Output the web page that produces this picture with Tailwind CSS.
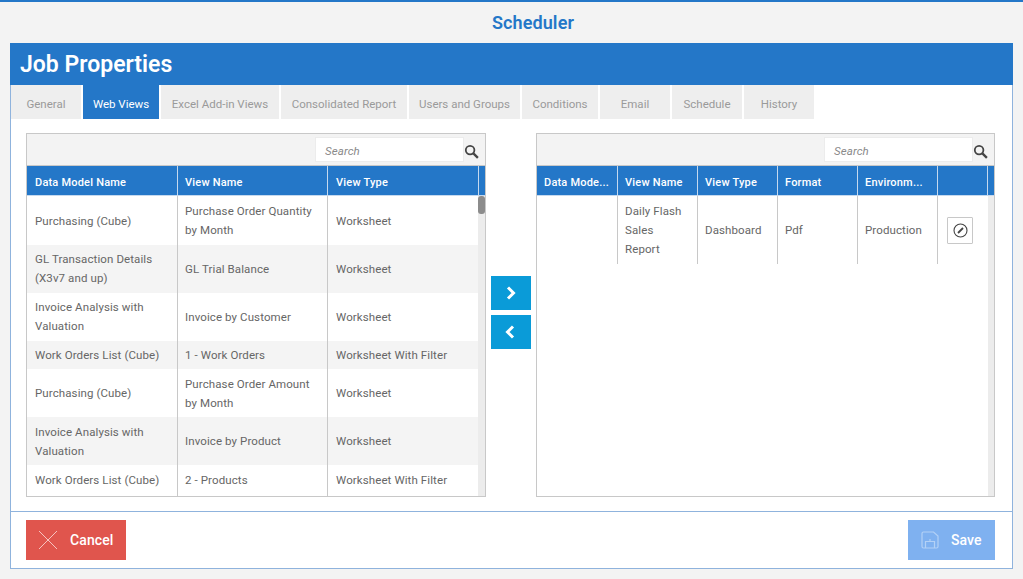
<!DOCTYPE html>
<html lang="en">
<head>
  <meta charset="UTF-8">
  <title>Scheduler</title>
  <script src="https://cdn.jsdelivr.net/npm/@tailwindcss/browser@4"></script>
</head>
<body class="bg-[#f3f3f3] h-[579px] overflow-hidden font-['Roboto',sans-serif] text-[#666] text-[11.5px] tracking-[0.1px]">
  <div class="h-[2px] bg-[#2477c8]"></div>
  <h1 class="h-[41px] flex items-center justify-center pl-[43px] text-[#2477c8] text-[18px] font-semibold">Scheduler</h1>

  <div class="mx-[10px] w-[1003px] h-[526px] bg-white border border-[#8fb3dd] border-t-0 flex flex-col">
    <div class="-mx-px h-[42px] bg-[#2477c8] text-white text-[23px] font-semibold flex items-center pl-[10px] pt-[2px] tracking-normal">Job Properties</div>

    <!-- Tabs -->
    <div class="h-[34px] flex gap-[2px] text-[#9a9a9a] tracking-normal">
      <div class="w-[70px] bg-[#eeeeee] flex items-center justify-center pt-[5px]">General</div>
      <div class="w-[76px] bg-[#2477c8] text-white flex items-center justify-center pt-[5px]">Web Views</div>
      <div class="w-[118px] bg-[#eeeeee] flex items-center justify-center pt-[5px]">Excel Add-in Views</div>
      <div class="w-[126px] bg-[#eeeeee] flex items-center justify-center pt-[5px]">Consolidated Report</div>
      <div class="w-[111px] bg-[#eeeeee] flex items-center justify-center pt-[5px]">Users and Groups</div>
      <div class="w-[76px] bg-[#eeeeee] flex items-center justify-center pt-[5px]">Conditions</div>
      <div class="w-[70px] bg-[#eeeeee] flex items-center justify-center pt-[5px]">Email</div>
      <div class="w-[70px] bg-[#eeeeee] flex items-center justify-center pt-[5px]">Schedule</div>
      <div class="w-[70px] bg-[#eeeeee] flex items-center justify-center pt-[5px]">History</div>
    </div>

    <!-- Body -->
    <div class="h-[392px] flex pl-[15px] pt-[14px]">
      <!-- Left grid -->
      <div class="w-[460px] h-[364px] border border-[#c8c8c8] flex flex-col">
        <div class="h-[32px] bg-[#f3f3f3] border-b border-[#c8c8c8] flex items-start justify-end shrink-0 pt-[3px]">
          <div class="w-[149px] h-[25px] bg-white border border-[#ececec] flex items-center pl-[9px] pt-[5px] italic text-[#8a8a8a]">Search</div>
          <div class="w-[21px] h-[25px] flex items-center pt-[4px]">
            <svg class="w-[15px] h-[15px]" viewBox="0 0 16 16" fill="none" stroke="#444"><circle cx="6.5" cy="6.5" r="4.6" stroke-width="1.9"/><path d="M10 10l4.800 4.800" stroke-width="2.400"/></svg>
          </div>
        </div>
        <div class="h-[30px] bg-[#2477c8] text-white text-[11px] tracking-[0.2px] font-medium grid grid-cols-[151px_150px_151px_1fr] border-b border-[#c5d9ef] shrink-0">
          <div class="border-r border-[#c5d9ef] flex items-center pl-[8px] pt-[5px]">Data Model Name</div>
          <div class="border-r border-[#c5d9ef] flex items-center pl-[7px] pt-[5px]">View Name</div>
          <div class="border-r border-[#c5d9ef] flex items-center pl-[8px] pt-[5px]">View Type</div>
          <div></div>
        </div>
        <div class="flex-1 flex overflow-hidden">
          <div class="w-[451px] leading-[19px]">
            <div class="h-[49px] grid grid-cols-[151px_150px_150px]">
              <div class="border-r border-[#c8c8c8] flex items-center pl-[8px] pt-[1px]">Purchasing (Cube)</div>
              <div class="border-r border-[#c8c8c8] flex items-center pl-[7px] pr-[10px]">Purchase Order Quantity by Month</div>
              <div class="flex items-center pl-[8px] pt-[1px]">Worksheet</div>
            </div>
            <div class="h-[48px] bg-[#f4f4f4] grid grid-cols-[151px_150px_150px]">
              <div class="border-r border-[#c8c8c8] flex items-center pl-[8px]">GL Transaction Details (X3v7 and up)</div>
              <div class="border-r border-[#c8c8c8] flex items-center pl-[7px] pr-[10px]">GL Trial Balance</div>
              <div class="flex items-center pl-[8px]">Worksheet</div>
            </div>
            <div class="h-[48px] grid grid-cols-[151px_150px_150px]">
              <div class="border-r border-[#c8c8c8] flex items-center pl-[8px]">Invoice Analysis with Valuation</div>
              <div class="border-r border-[#c8c8c8] flex items-center pl-[7px] pr-[10px]">Invoice by Customer</div>
              <div class="flex items-center pl-[8px]">Worksheet</div>
            </div>
            <div class="h-[28px] bg-[#f4f4f4] grid grid-cols-[151px_150px_150px]">
              <div class="border-r border-[#c8c8c8] flex items-center pl-[8px]">Work Orders List (Cube)</div>
              <div class="border-r border-[#c8c8c8] flex items-center pl-[7px] pr-[10px]">1 - Work Orders</div>
              <div class="flex items-center pl-[8px]">Worksheet With Filter</div>
            </div>
            <div class="h-[48px] grid grid-cols-[151px_150px_150px]">
              <div class="border-r border-[#c8c8c8] flex items-center pl-[8px]">Purchasing (Cube)</div>
              <div class="border-r border-[#c8c8c8] flex items-center pl-[7px] pr-[10px] pt-[2px]">Purchase Order Amount by Month</div>
              <div class="flex items-center pl-[8px]">Worksheet</div>
            </div>
            <div class="h-[48px] bg-[#f4f4f4] grid grid-cols-[151px_150px_150px]">
              <div class="border-r border-[#c8c8c8] flex items-center pl-[8px] pt-[2px]">Invoice Analysis with Valuation</div>
              <div class="border-r border-[#c8c8c8] flex items-center pl-[7px] pr-[10px]">Invoice by Product</div>
              <div class="flex items-center pl-[8px]">Worksheet</div>
            </div>
            <div class="h-[32px] grid grid-cols-[151px_150px_150px]">
              <div class="border-r border-[#c8c8c8] flex items-center pl-[8px] pb-[2px]">Work Orders List (Cube)</div>
              <div class="border-r border-[#c8c8c8] flex items-center pl-[7px] pr-[10px] pb-[2px]">2 - Products</div>
              <div class="flex items-center pl-[8px] pb-[2px]">Worksheet With Filter</div>
            </div>
          </div>
          <div class="w-[7px] bg-[#ececec]">
            <div class="h-[18px] bg-[#8c8c8c] rounded-[3px]"></div>
          </div>
        </div>
      </div>

      <!-- Move buttons -->
      <div class="w-[50px] flex flex-col items-center pt-[143px] gap-[5px]">
        <div class="w-[40px] h-[34px] bg-[#0a9bd8] flex items-center justify-center">
          <svg class="w-[14px] h-[14px]" viewBox="0 0 14 14" fill="none" stroke="#fff" stroke-width="3"><path d="M4 1.500L9.500 7 4 12.500"/></svg>
        </div>
        <div class="w-[40px] h-[34px] bg-[#0a9bd8] flex items-center justify-center pr-[2px]">
          <svg class="w-[14px] h-[14px]" viewBox="0 0 14 14" fill="none" stroke="#fff" stroke-width="3"><path d="M10 1.500L4.500 7 10 12.500"/></svg>
        </div>
      </div>

      <!-- Right grid -->
      <div class="w-[459px] h-[364px] border border-[#c8c8c8] flex flex-col">
        <div class="h-[32px] bg-[#f3f3f3] border-b border-[#c8c8c8] flex items-start justify-end shrink-0 pt-[3px]">
          <div class="w-[149px] h-[25px] bg-white border border-[#ececec] flex items-center pl-[9px] pt-[5px] italic text-[#8a8a8a]">Search</div>
          <div class="w-[21px] h-[25px] flex items-center pt-[4px]">
            <svg class="w-[15px] h-[15px]" viewBox="0 0 16 16" fill="none" stroke="#444"><circle cx="6.5" cy="6.5" r="4.6" stroke-width="1.9"/><path d="M10 10l4.800 4.800" stroke-width="2.400"/></svg>
          </div>
        </div>
        <div class="h-[30px] bg-[#2477c8] text-white text-[11px] tracking-[0.2px] font-medium grid grid-cols-[81px_80px_80px_80px_80px_50px_1fr] border-b border-[#c5d9ef] shrink-0">
          <div class="border-r border-[#c5d9ef] flex items-center pl-[7px] pt-[5px]">Data Mode...</div>
          <div class="border-r border-[#c5d9ef] flex items-center pl-[7px] pt-[5px]">View Name</div>
          <div class="border-r border-[#c5d9ef] flex items-center pl-[7px] pt-[5px]">View Type</div>
          <div class="border-r border-[#c5d9ef] flex items-center pl-[7px] pt-[5px]">Format</div>
          <div class="border-r border-[#c5d9ef] flex items-center pl-[7px] pt-[5px]">Environm...</div>
          <div class="border-r border-[#c5d9ef]"></div>
          <div></div>
        </div>
        <div class="flex-1 flex overflow-hidden">
          <div class="w-[451px] leading-[19px]">
            <div class="h-[68px] grid grid-cols-[81px_80px_80px_80px_80px_50px]">
              <div class="border-r border-[#c8c8c8]"></div>
              <div class="border-r border-[#c8c8c8] flex items-center pl-[7px] pr-[10px]">Daily Flash Sales Report</div>
              <div class="border-r border-[#c8c8c8] flex items-center pl-[7px]">Dashboard</div>
              <div class="border-r border-[#c8c8c8] flex items-center pl-[7px]">Pdf</div>
              <div class="border-r border-[#c8c8c8] flex items-center pl-[7px]">Production</div>
              <div class="flex items-center justify-center pr-[6px]">
                <div class="w-[26px] h-[27px] border border-[#c8c8c8] rounded-[1px] flex items-center justify-center">
                  <svg class="w-[15px] h-[15px]" viewBox="0 0 15 15" fill="none" stroke="#444"><circle cx="7.5" cy="7.5" r="6.5" stroke-width="1.1"/><path d="M5 10l5-5" stroke-width="1.8"/></svg>
                </div>
              </div>
            </div>
          </div>
          <div class="w-[7px] bg-[#ececec]"></div>
        </div>
      </div>
    </div>

    <!-- Footer -->
    <div class="flex-1 border-t border-[#8fb3dd] flex justify-between items-start pt-[8px] pl-[15px] pr-[16px] text-white text-[14px] font-medium">
      <div class="w-[100px] h-[40px] bg-[#e0554d] flex items-center pl-[12px] gap-[12px]">
        <svg class="w-[20px] h-[20px]" viewBox="0 0 20 20" stroke="#f6c4c0" stroke-width="1"><path d="M1 1l18 18M19 1L1 19"/></svg>
        <span>Cancel</span>
      </div>
      <div class="w-[87px] h-[40px] bg-[#7fb1f0] flex items-center pl-[13px] gap-[12px] mr-px">
        <svg class="w-[18px] h-[18px]" viewBox="0 0 18 18" fill="none" stroke="#b3d1f6" stroke-width="1.2"><path d="M2.500 1h10l4.500 4v10.500a1.500 1.500 0 0 1-1.500 1.500h-13a1.500 1.500 0 0 1-1.500-1.500v-13a1.500 1.500 0 0 1 1.500-1.500z"/><path d="M4.500 17v-6.500h9V17M9 10.500V8"/></svg>
        <span>Save</span>
      </div>
    </div>
  </div>
</body>
</html>
